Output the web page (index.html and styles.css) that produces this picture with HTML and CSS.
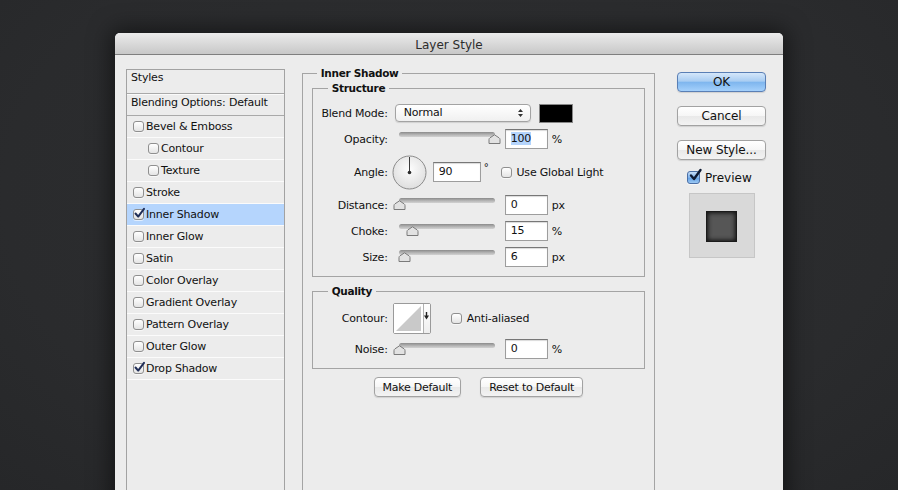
FILE: index.html
```html
<html>
    <head>
        <title>Layer Style</title>
        <link rel="stylesheet" href="styles.css">
    </head>
    <body>
        <div class="dialog">
            <div class="titlebar">Layer Style</div>
            <div class="dialog-body">
                <div class="styles-list">
                    <div class="list-head">Styles</div>
                    <div class="list-blend">Blending Options: Default</div>
                    <div class="item"><span class="check"></span>Bevel &amp; Emboss</div>
                    <div class="item sub"><span class="check"></span>Contour</div>
                    <div class="item sub"><span class="check"></span>Texture</div>
                    <div class="item"><span class="check"></span>Stroke</div>
                    <div class="item selected"><span class="check"><svg class="tick" width="13" height="13" viewBox="0 0 13 13"><path d="M2.5 6.5 L5.2 9.6 L11 1.8" /></svg></span>Inner Shadow</div>
                    <div class="item"><span class="check"></span>Inner Glow</div>
                    <div class="item"><span class="check"></span>Satin</div>
                    <div class="item"><span class="check"></span>Color Overlay</div>
                    <div class="item"><span class="check"></span>Gradient Overlay</div>
                    <div class="item"><span class="check"></span>Pattern Overlay</div>
                    <div class="item"><span class="check"></span>Outer Glow</div>
                    <div class="item"><span class="check"><svg class="tick" width="13" height="13" viewBox="0 0 13 13"><path d="M2.5 6.5 L5.2 9.6 L11 1.8" /></svg></span>Drop Shadow</div>
                </div>

                <fieldset class="effect">
                    <legend>Inner Shadow</legend>
                    <fieldset class="group structure">
                        <legend>Structure</legend>
                        <div class="row">
                            <label>Blend Mode:</label>
                            <div class="select">Normal
                                <svg class="arrows" width="7" height="10" viewBox="0 0 7 10"><path d="M3.5 1 L6 4 H1 Z M3.5 9 L6 6 H1 Z" /></svg>
                            </div>
                            <div class="swatch"></div>
                        </div>
                        <div class="row">
                            <label>Opacity:</label>
                            <div class="slider"><div class="track"></div><svg class="thumb" style="left:89px" width="13" height="10" viewBox="0 0 13 10"><path d="M1 9.5 V5.5 Q1 4.5 2 3.8 L6.5 0.8 L11 3.8 Q12 4.5 12 5.5 V9.5 Z" /></svg></div>
                            <div class="field"><span class="sel">100</span></div>
                            <span class="unit">%</span>
                        </div>
                        <div class="row tall">
                            <label>Angle:</label>
                            <svg class="dial" width="35" height="35" viewBox="0 0 35 35">
                                <defs>
                                    <radialGradient id="dialfill" cx="50%" cy="40%" r="60%">
                                        <stop offset="0" stop-color="#fdfdfd"/>
                                        <stop offset="1" stop-color="#dedede"/>
                                    </radialGradient>
                                </defs>
                                <circle cx="17.5" cy="17.5" r="16.5" fill="url(#dialfill)" stroke="#8a8a8a"/>
                                <line x1="17.5" y1="17.5" x2="17.5" y2="2" stroke="#3a3a3a" stroke-width="1"/>
                                <circle cx="17.5" cy="17.5" r="1.8" fill="#2a2a2a"/>
                            </svg>
                            <div class="field wide">90</div>
                            <span class="degree">°</span>
                            <span class="check global"></span>
                            <span class="check-label">Use Global Light</span>
                        </div>
                        <div class="row">
                            <label>Distance:</label>
                            <div class="slider"><div class="track"></div><svg class="thumb" style="left:-6px" width="13" height="10" viewBox="0 0 13 10"><path d="M1 9.5 V5.5 Q1 4.5 2 3.8 L6.5 0.8 L11 3.8 Q12 4.5 12 5.5 V9.5 Z" /></svg></div>
                            <div class="field">0</div>
                            <span class="unit">px</span>
                        </div>
                        <div class="row">
                            <label>Choke:</label>
                            <div class="slider"><div class="track"></div><svg class="thumb" style="left:7px" width="13" height="10" viewBox="0 0 13 10"><path d="M1 9.5 V5.5 Q1 4.5 2 3.8 L6.5 0.8 L11 3.8 Q12 4.5 12 5.5 V9.5 Z" /></svg></div>
                            <div class="field">15</div>
                            <span class="unit">%</span>
                        </div>
                        <div class="row">
                            <label>Size:</label>
                            <div class="slider"><div class="track"></div><svg class="thumb" style="left:-1px" width="13" height="10" viewBox="0 0 13 10"><path d="M1 9.5 V5.5 Q1 4.5 2 3.8 L6.5 0.8 L11 3.8 Q12 4.5 12 5.5 V9.5 Z" /></svg></div>
                            <div class="field">6</div>
                            <span class="unit">px</span>
                        </div>
                    </fieldset>

                    <fieldset class="group quality">
                        <legend>Quality</legend>
                        <div class="row contour-row">
                            <label>Contour:</label>
                            <div class="contour">
                                <svg width="29" height="29" viewBox="0 0 29 29"><rect x="0" y="0" width="29" height="29" fill="#fff"/><path d="M2 27 L27 2 V27 Z" fill="#c9c9c9"/></svg>
                                <div class="contour-drop"><svg width="5" height="8" viewBox="0 0 5 8"><path d="M1.8 0 H3.2 V3.5 H5 L2.5 7.5 L0 3.5 H1.8 Z" fill="#222"/></svg></div>
                            </div>
                            <span class="check anti"></span>
                            <span class="check-label">Anti-aliased</span>
                        </div>
                        <div class="row noise-row">
                            <label>Noise:</label>
                            <div class="slider"><div class="track"></div><svg class="thumb" style="left:-6px" width="13" height="10" viewBox="0 0 13 10"><path d="M1 9.5 V5.5 Q1 4.5 2 3.8 L6.5 0.8 L11 3.8 Q12 4.5 12 5.5 V9.5 Z" /></svg></div>
                            <div class="field">0</div>
                            <span class="unit">%</span>
                        </div>
                    </fieldset>

                    <div class="defaults">
                        <button class="btn small">Make Default</button>
                        <button class="btn small">Reset to Default</button>
                    </div>
                </fieldset>

                <div class="actions">
                    <button class="btn primary">OK</button>
                    <button class="btn">Cancel</button>
                    <button class="btn">New Style...</button>
                    <div class="preview-row">
                        <span class="check big"><svg class="tick" width="15" height="15" viewBox="0 0 15 15"><path d="M3 7.5 L6 11 L12.5 2" /></svg></span>
                        Preview
                    </div>
                    <div class="preview">
                        <div class="preview-square"></div>
                    </div>
                </div>
            </div>
        </div>
    </body>
</html>
```

FILE: styles.css
```css
*{
    box-sizing: border-box;
}
body{
    margin: 0;
    padding: 33px 0 0 115px;
    height: 490px;
    overflow: hidden;
    background: radial-gradient(ellipse at 50% 40%, #2e2f31 0%, #2a2b2d 70%, #262729 100%);
    font-family: "DejaVu Sans", sans-serif;
    font-size: 11px;
    letter-spacing: -0.2px;
    color: #111;
}

.dialog{
    width: 668px;
    height: 480px;
    background: #ececec;
    border-radius: 5px 5px 0 0;
    box-shadow: 0 0 22px 4px rgba(0, 0, 0, .5);
}
.titlebar{
    height: 22px;
    padding-top: 2px;
    line-height: 20px;
    text-align: center;
    font-size: 12px;
    letter-spacing: 0;
    color: #2c2c2c;
    border-bottom: 1px solid #7f7f7f;
    border-radius: 5px 5px 0 0;
    background: linear-gradient(#ebebeb, #d6d6d6 60%, #c8c8c8);
}
.dialog-body{
    display: flex;
    align-items: flex-start;
    padding: 0 17px 0 11px;
}

/* left list */
.styles-list{
    width: 159px;
    height: 440px;
    margin-top: 14px;
    border: 1px solid #a2a2a2;
}
.list-head{
    height: 24px;
    line-height: 15px;
    padding-left: 4px;
    border-bottom: 1px solid #a9a9a9;
}
.list-blend{
    height: 22px;
    line-height: 15px;
    padding: 0 0 0 4px;
    border-top: 1px solid #fafafa;
    border-bottom: 1px solid #a9a9a9;
}
.item{
    display: flex;
    align-items: center;
    height: 22px;
    padding-left: 6px;
    border-bottom: 1px solid #fbfbfb;
}
.item.sub{
    padding-left: 21px;
}
.item.selected{
    background: #b5d5fd;
}
.check{
    position: relative;
    flex: none;
    width: 11px;
    height: 11px;
    margin-right: 2px;
    border: 1px solid #8f8f8f;
    border-radius: 3px;
    background: linear-gradient(#ffffff, #e4e4e4);
    box-shadow: 0 1px 0 rgba(255, 255, 255, .6);
}
.tick{
    position: absolute;
    left: -1px;
    top: -3px;
}
.tick path{
    fill: none;
    stroke: #1f2d57;
    stroke-width: 2;
    stroke-linecap: round;
    stroke-linejoin: round;
}

/* fieldsets */
fieldset{
    margin: 0;
    padding: 0;
    border: 1px solid #a4a4a4;
    min-width: 0;
}
legend{
    padding: 0 4px;
    font-weight: bold;
    font-size: 10.5px;
    line-height: 14px;
    letter-spacing: -0.3px;
}
.effect{
    width: 354px;
    height: 440px;
    margin: 11px 0 0 17px;
    padding: 0 9px;
}
.effect > legend{
    margin-left: 5px;
}
.group > legend{
    margin-left: 15px;
}
.structure{
    margin-top: 1px;
    padding: 5px 0 6px 0;
}
.quality{
    margin-top: 7px;
    padding: 2px 0 7px 0;
}
.row{
    display: flex;
    align-items: center;
    height: 26px;
}
.row.tall{
    height: 40px;
}
.contour-row{
    height: 37px;
}
.noise-row{
    height: 24px;
}
.row label{
    flex: none;
    width: 75px;
    text-align: right;
}

.select{
    position: relative;
    width: 136px;
    height: 18px;
    margin-left: 7px;
    padding-left: 8px;
    line-height: 16px;
    border: 1px solid #a3a3a3;
    border-radius: 4px;
    background: linear-gradient(#ffffff, #f0f0f0);
    box-shadow: 0 1px 1px rgba(0, 0, 0, .12);
}
.arrows{
    position: absolute;
    right: 6px;
    top: 3px;
}
.arrows path{
    fill: #333;
}
.swatch{
    width: 34px;
    height: 19px;
    margin-left: 8px;
    background: #000;
    border: 1px solid #888;
}

.slider{
    position: relative;
    flex: none;
    align-self: flex-start;
    width: 96px;
    height: 14px;
    margin: 5px 0 0 11px;
}
.track{
    position: absolute;
    left: 0;
    right: 0;
    top: 1px;
    height: 5px;
    border-radius: 3px;
    background: linear-gradient(#8b8b8b, #b9b9b9 60%, #d2d2d2);
}
.thumb{
    position: absolute;
    top: 3px;
}
.thumb path{
    fill: #e2e2e2;
    stroke: #7a7a7a;
}

.field{
    flex: none;
    width: 43px;
    height: 20px;
    margin-left: 10px;
    padding-left: 5px;
    line-height: 18px;
    background: #fff;
    border: 1px solid #9d9d9d;
    border-top-color: #777;
    box-shadow: inset 0 1px 1px rgba(0, 0, 0, .15);
}
.field.wide{
    width: 48px;
    margin-left: 6px;
}
.sel{
    background: #b4d4fc;
}
.unit{
    margin-left: 4px;
}
.dial{
    flex: none;
    margin-left: 4px;
}
.degree{
    align-self: flex-start;
    margin: 10px 0 0 3px;
    font-size: 10px;
}
.check.global{
    margin-left: 12px;
}
.check.anti{
    margin-left: 20px;
}
.check-label{
    margin-left: 3px;
}

.contour{
    display: flex;
    width: 38px;
    height: 31px;
    margin-left: 5px;
    border: 1px solid #9a9a9a;
    border-radius: 2px;
    background: #fff;
}
.contour svg{
    display: block;
}
.contour-drop{
    display: flex;
    align-items: center;
    justify-content: center;
    flex: 1;
    padding-bottom: 6px;
    border-left: 1px solid #b2b2b2;
    background: linear-gradient(#ffffff, #eeeeee);
}

.defaults{
    display: flex;
    justify-content: center;
    gap: 19px;
    margin-top: 8px;
}

.btn{
    display: block;
    height: 20px;
    padding: 0;
    font-family: "DejaVu Sans", sans-serif;
    font-size: 12px;
    letter-spacing: -0.1px;
    color: #111;
    border: 1px solid #a2a2a2;
    border-radius: 4px;
    background: linear-gradient(#ffffff, #f6f6f6 50%, #e9e9e9 51%, #f3f3f3);
    box-shadow: 0 1px 1px rgba(0, 0, 0, .12);
}
.btn.small{
    padding: 0 8px;
    font-size: 11px;
    letter-spacing: -0.25px;
}
.actions{
    flex: none;
    width: 89px;
    margin: 17px 0 0 22px;
}
.actions .btn{
    width: 100%;
    margin-bottom: 14px;
}
.btn.primary{
    border-color: #5a7fb5;
    background: linear-gradient(#d5e7fa, #a9cdf2 45%, #7fb6ee 52%, #a4d0fb);
}
.preview-row{
    display: flex;
    align-items: center;
    height: 15px;
    margin-top: -4px;
    padding-left: 10px;
    font-size: 12px;
    letter-spacing: 0;
}
.check.big{
    width: 13px;
    height: 13px;
    margin-right: 5px;
    border-color: #4b6fa6;
    background: linear-gradient(#c4ddf7, #7eb2ec 50%, #5e9de3 51%, #9cc9f4);
}
.check.big .tick{
    left: 0;
    top: -4px;
}
.check.big .tick path{
    stroke: #0d1a33;
    stroke-width: 2.4;
}
.preview{
    display: flex;
    width: 66px;
    height: 65px;
    margin: 8px 0 0 12px;
    padding: 17px 0 0 16px;
    background: #d9d9d9;
    border: 1px solid #c6c6c6;
}
.preview-square{
    width: 31px;
    height: 31px;
    background: #565656;
    border: 1px solid #1a1a1a;
    box-shadow: inset 0 0 4px 1px #111;
}
```
